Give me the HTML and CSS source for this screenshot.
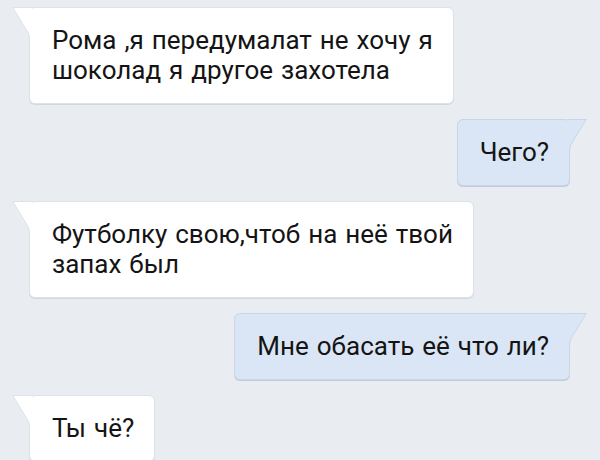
FILE: index.html
```html
<!DOCTYPE html>
<html lang="ru">
<head>
<meta charset="utf-8">
<link rel="stylesheet" href="styles.css">
</head>
<body>
<div class="chat">
  <div class="msg in">
    <svg class="tail" width="20" height="34" viewBox="0 0 20 34"><path class="fill" d="M0,0 H20 V34 H17.5 L17.5,30 Q17.3,27.5 16,25.5 L0.8,0.5 Z"/><path class="line" d="M20,0.5 H0.8 L16,25.5 Q17.5,28 17.5,34"/></svg>
    Рома ,я передумалат не хочу я<br>шоколад я другое захотела
  </div>
  <div class="msg out">
    <svg class="tail" width="20" height="34" viewBox="0 0 20 34"><path class="fill" d="M20,0 H0 V34 H2.5 L2.5,30 Q2.7,27.5 4,25.5 L19.2,0.5 Z"/><path class="line" d="M0,0.5 H19.2 L4,25.5 Q2.5,28 2.5,34"/></svg>
    Чего?
  </div>
  <div class="msg in">
    <svg class="tail" width="20" height="34" viewBox="0 0 20 34"><path class="fill" d="M0,0 H20 V34 H17.5 L17.5,30 Q17.3,27.5 16,25.5 L0.8,0.5 Z"/><path class="line" d="M20,0.5 H0.8 L16,25.5 Q17.5,28 17.5,34"/></svg>
    Футболку свою,чтоб на неё твой<br>запах был
  </div>
  <div class="msg out">
    <svg class="tail" width="20" height="34" viewBox="0 0 20 34"><path class="fill" d="M20,0 H0 V34 H2.5 L2.5,30 Q2.7,27.5 4,25.5 L19.2,0.5 Z"/><path class="line" d="M0,0.5 H19.2 L4,25.5 Q2.5,28 2.5,34"/></svg>
    Мне обасать её что ли?
  </div>
  <div class="msg in">
    <svg class="tail" width="20" height="34" viewBox="0 0 20 34"><path class="fill" d="M0,0 H20 V34 H17.5 L17.5,30 Q17.3,27.5 16,25.5 L0.8,0.5 Z"/><path class="line" d="M20,0.5 H0.8 L16,25.5 Q17.5,28 17.5,34"/></svg>
    Ты чё?
  </div>
</div>
</body>
</html>
```
FILE: styles.css
```css
html, body {
  margin: 0;
  padding: 0;
  background: #e9edf2;
  overflow: hidden;
}
.chat {
  width: 600px;
  height: 460px;
  display: flex;
  flex-direction: column;
  align-items: flex-start;
  gap: 15px;
  padding-top: 7px;
  box-sizing: border-box;
  font-family: Roboto, "Liberation Sans", sans-serif;
  font-size: 26px;
  line-height: 30px;
  word-spacing: 1.5px;
  color: #141414;
}
.msg {
  position: relative;
  padding: 17px 20px 18px 22px;
  border-radius: 6px;
  border: 1px solid #dde2e8;
  box-shadow: 0 1px 0 #d2d8df;
  white-space: nowrap;
}
.msg.in {
  margin-left: 29px;
  background: #ffffff;
}
.msg.out {
  align-self: flex-end;
  margin-right: 30px;
  background: #dae6f5;
  border-color: #c8d6e7;
  box-shadow: 0 1px 0 #bccbdd;
}
.tail {
  position: absolute;
  top: -1px;
}
.msg.in .tail {
  left: -18px;
}
.msg.out .tail {
  right: -18px;
}
.msg.in .tail .fill { fill: #ffffff; }
.msg.in .tail .line { fill: none; stroke: #dde2e8; stroke-width: 1; }
.msg.out .tail .fill { fill: #dae6f5; }
.msg.out .tail .line { fill: none; stroke: #c8d6e7; stroke-width: 1; }
```
